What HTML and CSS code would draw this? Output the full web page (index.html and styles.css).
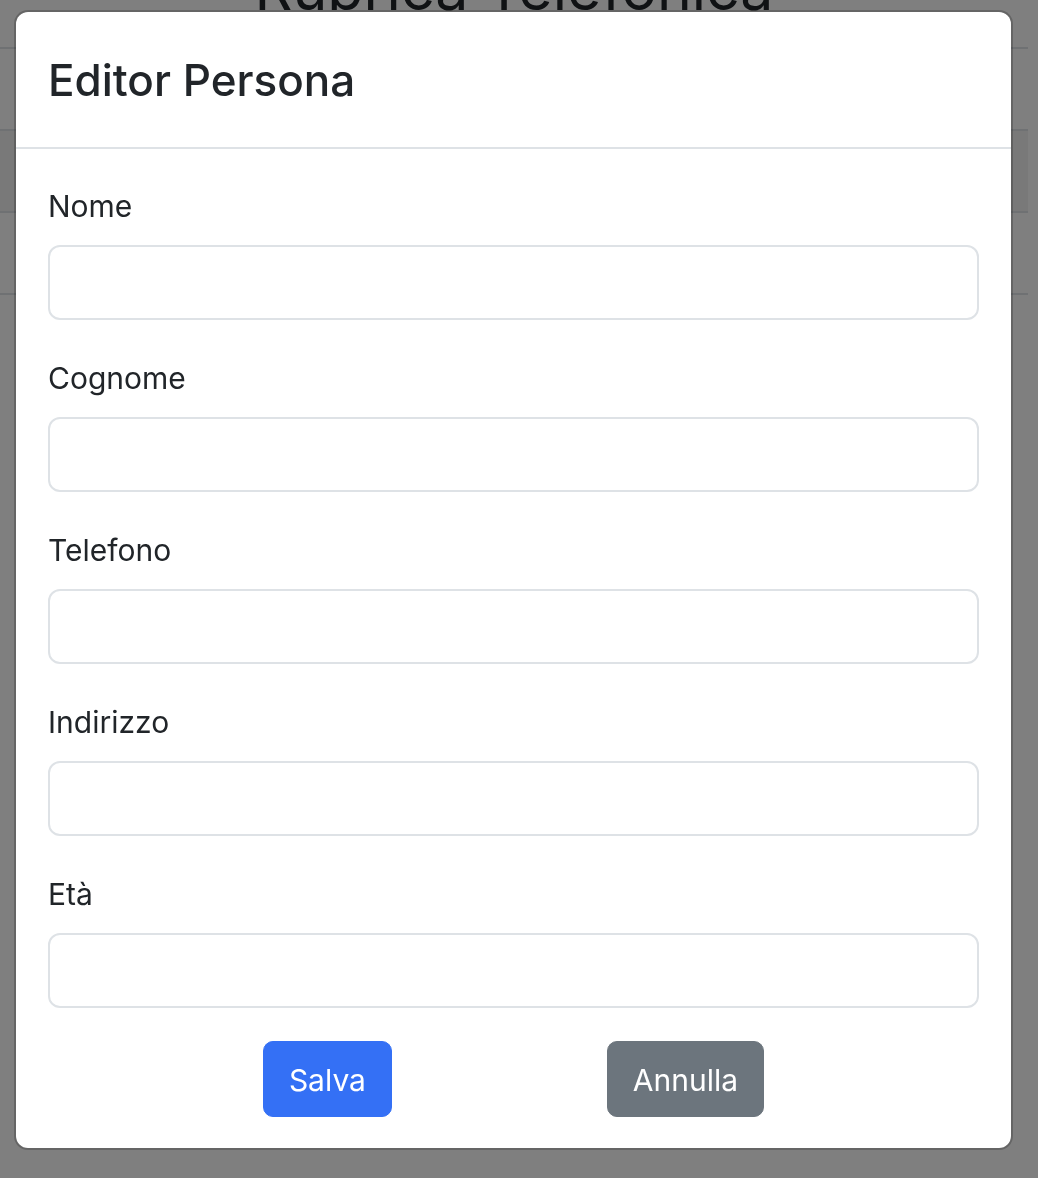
FILE: index.html
```html
<!DOCTYPE html>
<html lang="it">
<head>
<meta charset="utf-8">
<title>Rubrica Telefonica</title>
<link rel="stylesheet" href="styles.css">
</head>
<body>
<div class="page">
  <h1 class="page-title">Rubrica Telefonica</h1>
  <table class="contacts">
    <thead>
      <tr><th><div class="cell"></div></th><th><div class="cell"></div></th><th><div class="cell"></div></th><th><div class="cell"></div></th><th><div class="cell"></div></th></tr>
    </thead>
    <tbody>
      <tr class="striped"><td><div class="cell"></div></td><td><div class="cell"></div></td><td><div class="cell"></div></td><td><div class="cell"></div></td><td><div class="cell"></div></td></tr>
      <tr><td><div class="cell"></div></td><td><div class="cell"></div></td><td><div class="cell"></div></td><td><div class="cell"></div></td><td><div class="cell"></div></td></tr>
    </tbody>
  </table>
</div>
<div class="backdrop"></div>
<div class="modal">
  <div class="modal-header">
    <h5 class="modal-title">Editor Persona</h5>
  </div>
  <form class="modal-body">
    <div class="form-group">
      <label class="form-label" for="nome">Nome</label>
      <input class="form-control" id="nome" type="text">
    </div>
    <div class="form-group">
      <label class="form-label" for="cognome">Cognome</label>
      <input class="form-control" id="cognome" type="text">
    </div>
    <div class="form-group">
      <label class="form-label" for="telefono">Telefono</label>
      <input class="form-control" id="telefono" type="text">
    </div>
    <div class="form-group">
      <label class="form-label" for="indirizzo">Indirizzo</label>
      <input class="form-control" id="indirizzo" type="text">
    </div>
    <div class="form-group">
      <label class="form-label" for="eta">Età</label>
      <input class="form-control" id="eta" type="text">
    </div>
    <div class="actions">
      <button class="btn btn-primary" type="button">Salva</button>
      <button class="btn btn-secondary" type="button">Annulla</button>
    </div>
  </form>
</div>
</body>
</html>
```

FILE: styles.css
```css
* {
  box-sizing: border-box;
}

html, body {
  margin: 0;
  padding: 0;
}

body {
  font-family: Inter, "Liberation Sans", sans-serif;
  color: #212529;
  background: #ffffff;
  overflow: hidden;
  height: 1178px;
}

.page {
  padding: 0 10px 0 0;
}

.page-title {
  margin: -41px 0 29px;
  font-size: 59px;
  line-height: 1;
  font-weight: 400;
  text-align: center;
}

.contacts {
  width: 100%;
  border-collapse: separate;
  border-spacing: 0;
}

.contacts th,
.contacts td {
  padding: 0;
  border-top: 2px solid #dee2e6;
  text-align: left;
}

.contacts tbody tr:last-child td {
  border-bottom: 2px solid #dee2e6;
}

.contacts .striped td {
  background: rgba(0, 0, 0, 0.05);
}

.cell {
  height: 80px;
  padding: 0 24px;
}

.backdrop {
  position: fixed;
  inset: 0;
  background: rgba(0, 0, 0, 0.5);
}

.modal {
  position: absolute;
  left: 14px;
  top: 10px;
  width: 999px;
  background: #ffffff;
  border: 2px solid rgba(0, 0, 0, 0.2);
  border-radius: 14px;
  background-clip: padding-box;
}

.modal-header {
  padding: 42px 32px 40px;
  border-bottom: 2px solid #dee2e6;
}

.modal-title {
  margin: 0;
  font-size: 44px;
  line-height: 1.2;
  font-weight: 500;
}

.modal-body {
  padding: 35px 32px 31px;
  margin: 0;
}

.form-group + .form-group {
  margin-top: 36px;
}

.form-label {
  display: block;
  font-size: 30px;
  line-height: 45px;
  margin-bottom: 16px;
}

.form-control {
  display: block;
  width: 100%;
  height: 75px;
  border: 2px solid #dee2e6;
  border-radius: 12px;
  background: #ffffff;
  font: inherit;
  font-size: 30px;
  padding: 0 24px;
  outline: none;
}

.actions {
  display: flex;
  justify-content: space-evenly;
  margin-top: 33px;
}

.btn {
  height: 76px;
  padding: 3px 25px 0;
  border: 1px solid transparent;
  border-radius: 10px;
  font-family: inherit;
  font-size: 30px;
  line-height: 1.5;
  color: #ffffff;
  cursor: pointer;
}

.btn-primary {
  background: #3470f5;
  border-color: #3470f5;
}

.btn-secondary {
  background: #6c757d;
  border-color: #6c757d;
}
```
